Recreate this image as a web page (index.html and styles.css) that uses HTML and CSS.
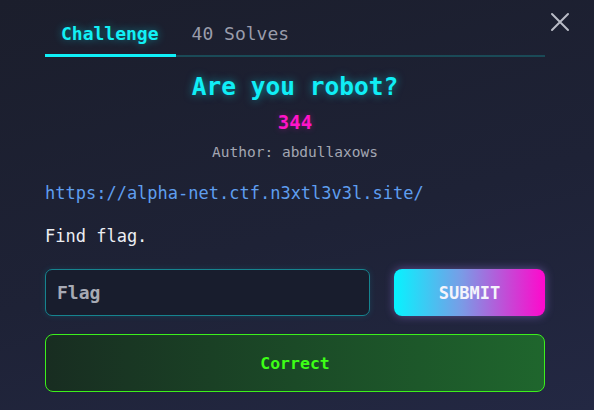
FILE: index.html
```html
<!DOCTYPE html>
<html lang="en">
<head>
<meta charset="utf-8">
<title>Are you robot?</title>
<link rel="stylesheet" href="styles.css">
</head>
<body>
<div class="modal">
  <button class="close" aria-label="Close">
    <svg width="20" height="20" viewBox="0 0 20 20"><path d="M2 2 L18 18 M18 2 L2 18" stroke="#b9bcc6" stroke-width="2" stroke-linecap="round" fill="none"/></svg>
  </button>
  <nav class="tabs">
    <span class="tab active">Challenge</span>
    <span class="tab">40 Solves</span>
  </nav>
  <h1 class="title">Are you robot?</h1>
  <div class="points">344</div>
  <div class="author">Author: abdullaxows</div>
  <a class="link" href="#">https://alpha-net.ctf.n3xtl3v3l.site/</a>
  <p class="desc">Find flag.</p>
  <form class="submit-row">
    <input class="flag-input" type="text" placeholder="Flag">
    <button class="submit" type="button">SUBMIT</button>
  </form>
  <div class="result">Correct</div>
</div>
</body>
</html>
```
FILE: styles.css
```css
html, body {
  margin: 0;
  height: 100%;
}
body {
  background: linear-gradient(165deg, #1b1e2c 0%, #1e2236 55%, #232843 100%);
  font-family: "DejaVu Sans Mono", "Liberation Mono", monospace;
  color: #e6e7ee;
  overflow: hidden;
}
.modal {
  position: relative;
  padding: 22px 49px 0 45px;
  display: flex;
  flex-direction: column;
}
.close {
  position: absolute;
  top: 12px;
  right: 24px;
  background: none;
  border: 0;
  padding: 0;
  width: 20px;
  height: 20px;
  cursor: pointer;
}
.close svg { display: block; }
.tabs {
  display: flex;
  border-bottom: 2px solid #1a4a57;
}
.tab {
  font-size: 18px;
  line-height: 24px;
  padding: 0 17px 9px 16px;
  color: #9a9cab;
  font-weight: 500;
}
.tab.active {
  color: #12f0f5;
  font-weight: bold;
  text-shadow: 0 0 8px rgba(0, 240, 255, 0.45);
  border-bottom: 3px solid #0ff0f8;
  margin-bottom: -2px;
  padding-bottom: 8px;
}
.tab + .tab { padding-left: 16px; }
.title {
  margin: 15px 0 0;
  text-align: center;
  font-size: 24.5px;
  line-height: 30px;
  font-weight: bold;
  color: #10eef6;
  text-shadow: 0 0 8px rgba(0, 240, 255, 0.5);
}
.points {
  margin-top: 8px;
  text-align: center;
  font-size: 19px;
  line-height: 24px;
  font-weight: bold;
  color: #ff14c8;
  text-shadow: 0 0 6px rgba(255, 20, 200, 0.35);
}
.author {
  margin-top: 8px;
  text-align: center;
  font-size: 14.5px;
  line-height: 20px;
  color: #a3a6b2;
}
.link {
  margin-top: 19px;
  font-size: 17px;
  line-height: 24px;
  color: #5f9eef;
  text-decoration: none;
  align-self: flex-start;
}
.desc {
  margin: 19px 0 0;
  font-size: 17px;
  line-height: 24px;
  color: #eceef3;
}
.submit-row {
  margin-top: 21px;
  display: flex;
  gap: 24px;
}
.flag-input {
  flex: 1;
  box-sizing: border-box;
  height: 47px;
  border: 1px solid #16848f;
  border-radius: 7px;
  background: #181d2d;
  padding: 0 11px;
  font-family: inherit;
  font-size: 18px;
  font-weight: bold;
  color: #e6e7ee;
  box-shadow: 0 0 6px rgba(0, 200, 220, 0.15);
  outline: none;
}
.flag-input::placeholder { color: #a7aab4; }
.submit {
  width: 151px;
  height: 47px;
  border: 0;
  border-radius: 8px;
  background: linear-gradient(90deg, #06f3ff 0%, #7a9be6 45%, #c44ad6 75%, #ff08cc 100%);
  color: #f4f4fb;
  font-family: inherit;
  font-size: 17px;
  font-weight: bold;
  box-shadow: 0 0 10px rgba(170, 130, 255, 0.45);
  cursor: pointer;
}
.result {
  margin-top: 18px;
  box-sizing: border-box;
  height: 58px;
  border: 1px solid #3cf01c;
  border-radius: 8px;
  background: linear-gradient(90deg, #182d21 0%, #1b4a27 50%, #1f662d 100%);
  display: flex;
  align-items: center;
  justify-content: center;
  font-size: 16.5px;
  font-weight: bold;
  color: #3dff16;
}
```
